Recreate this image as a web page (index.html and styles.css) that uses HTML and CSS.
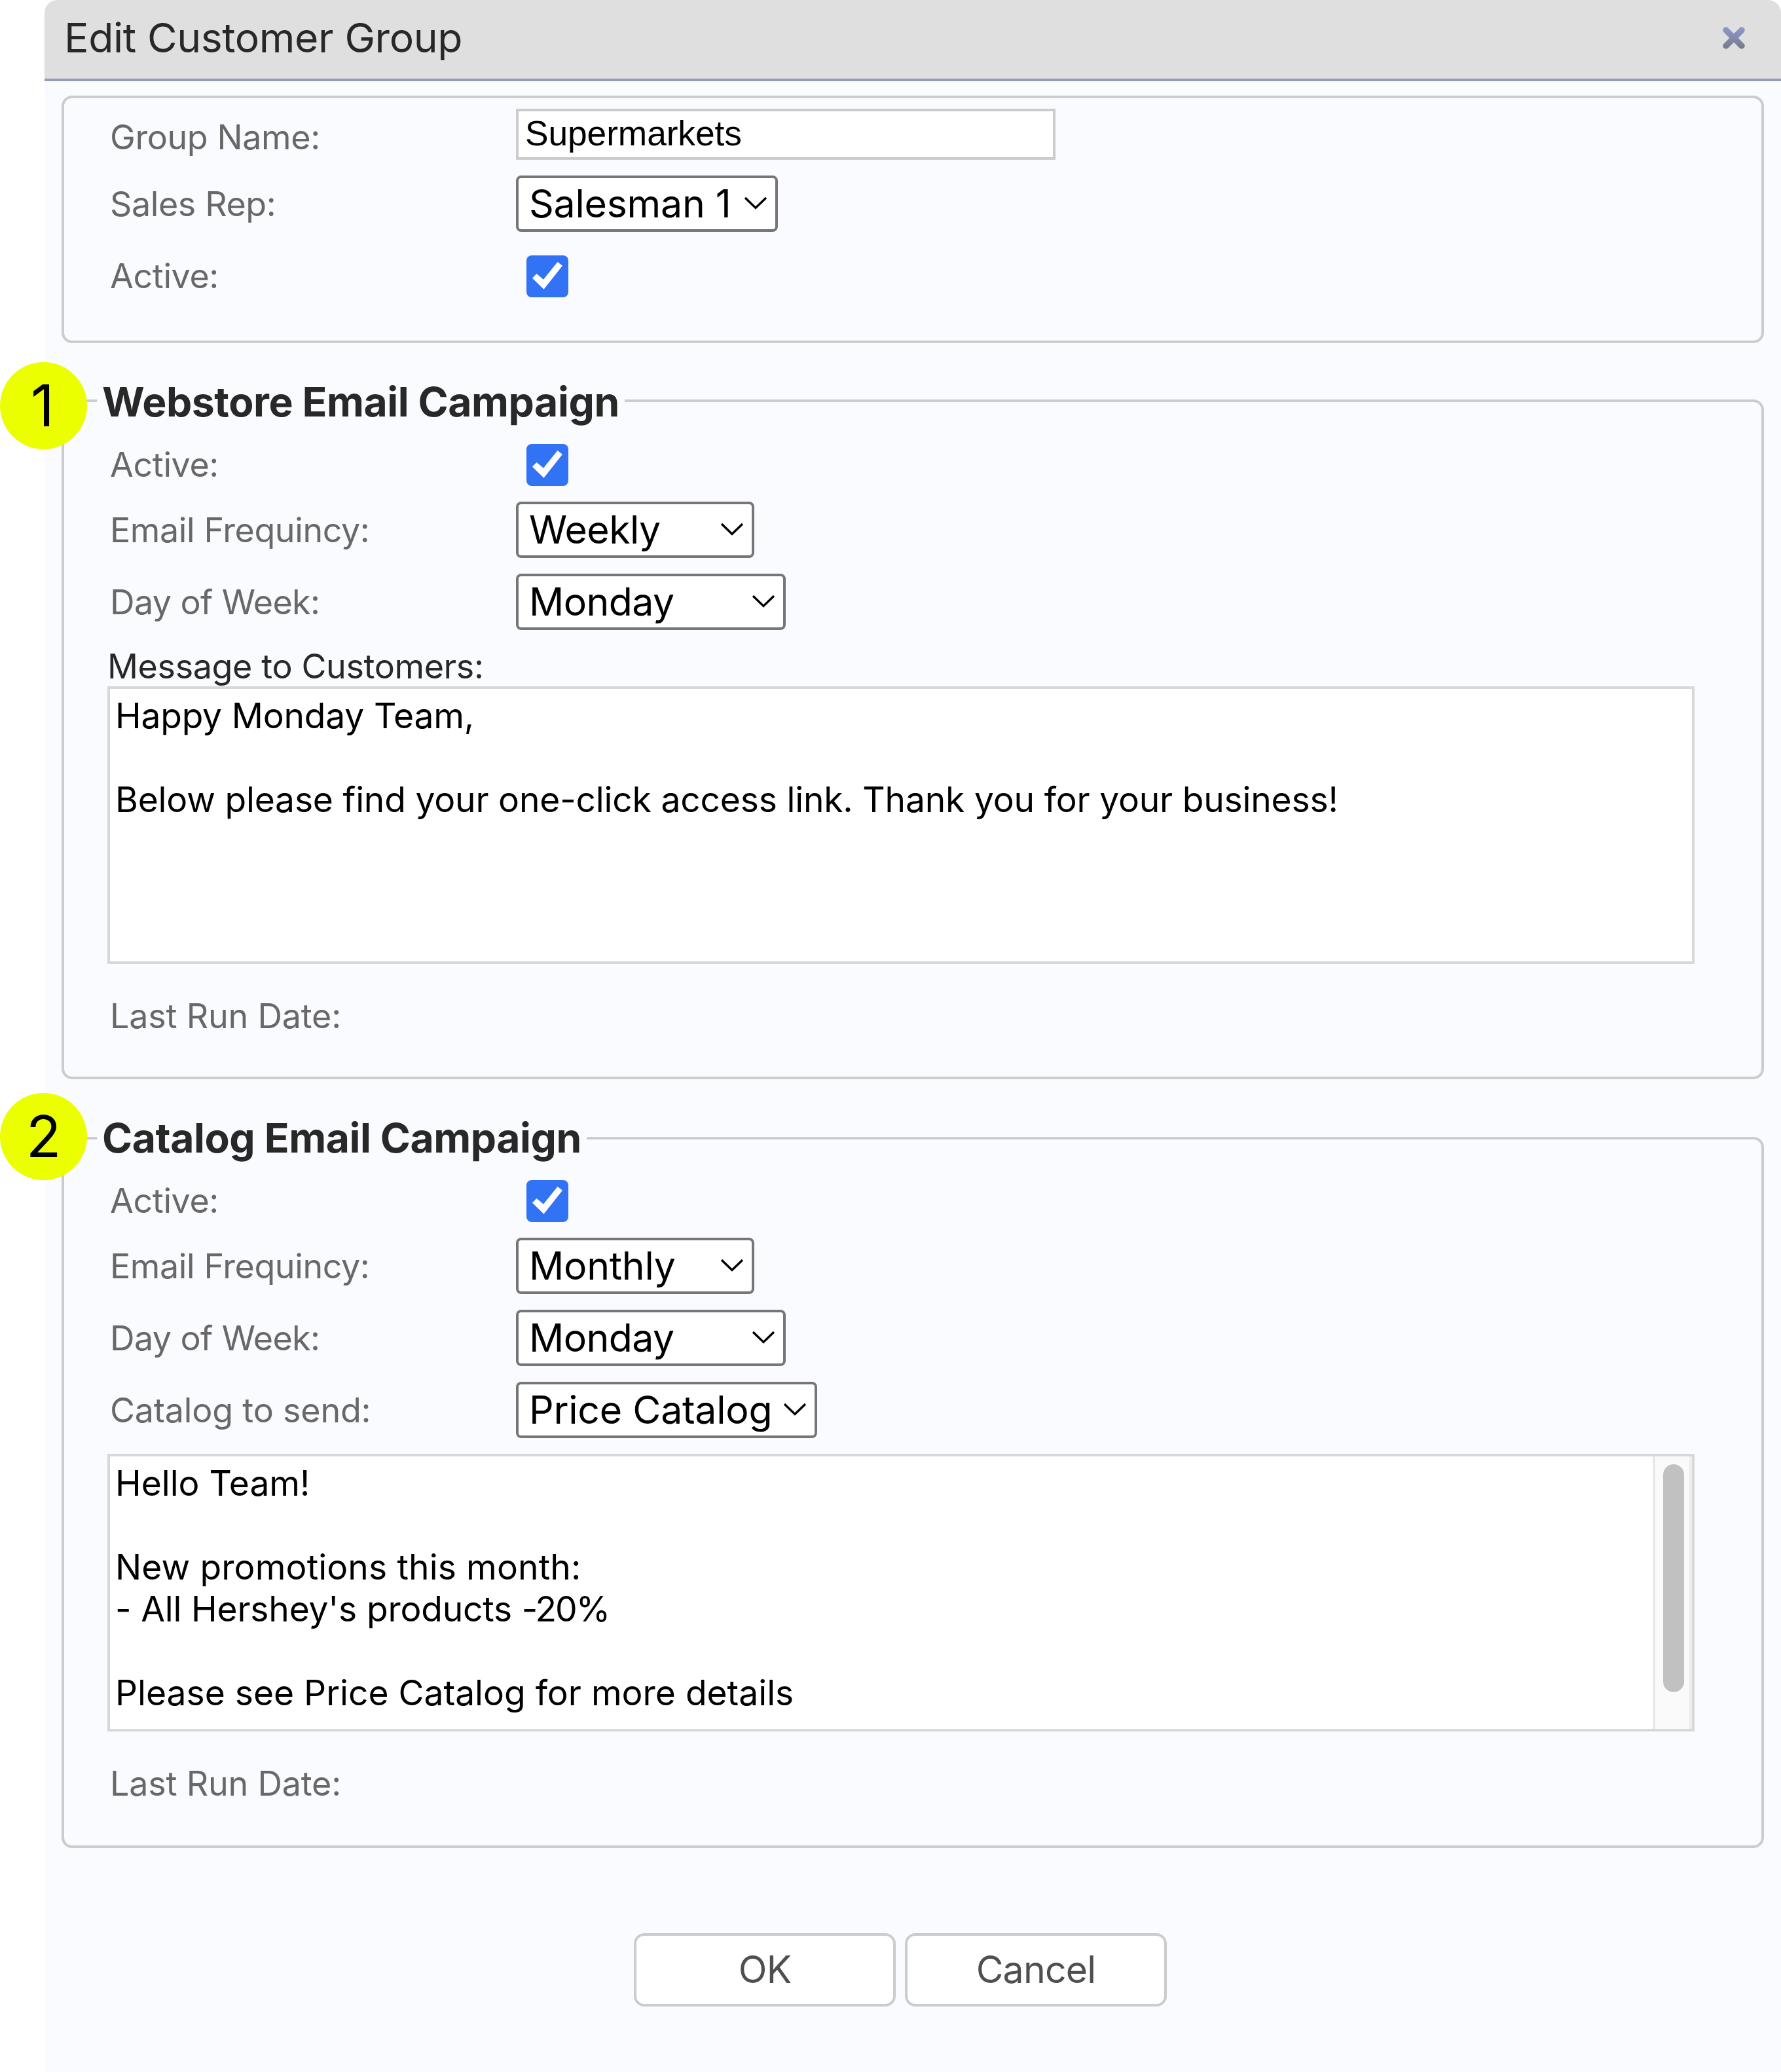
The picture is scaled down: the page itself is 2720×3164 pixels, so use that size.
FILE: index.html
```html
<!DOCTYPE html>
<html lang="en">
<head>
<meta charset="utf-8">
<title>Edit Customer Group</title>
<link rel="stylesheet" href="styles.css">
</head>
<body>
<svg class="defs" aria-hidden="true">
  <symbol id="check" viewBox="0 0 64 64"><path d="M9 34.7 15.5 28 26 36.7 47.5 10 55 15.7 26.5 51.7Z" fill="#fff"/></symbol>
  <symbol id="chevron" viewBox="0 0 36 22"><path d="M2 3 18 18.5 34 3" fill="none" stroke="#000" stroke-width="3.4"/></symbol>
</svg>
<main class="dialog">
  <header class="titlebar">
    <h1 class="title">Edit Customer Group</h1>
    <svg class="close" viewBox="0 0 36 36">
      <defs><linearGradient id="g" gradientUnits="userSpaceOnUse" x1="0" y1="2" x2="0" y2="34"><stop offset="0" stop-color="#8e97cc"/><stop offset="1" stop-color="#777a8b"/></linearGradient></defs>
      <path d="M6 6 30 30M30 6 6 30" stroke="url(#g)" stroke-width="9.5" stroke-linecap="round"/>
    </svg>
  </header>

  <fieldset class="group general">
    <div class="row"><label class="label">Group Name:</label><div class="input">Supermarkets</div></div>
    <div class="row gap-m"><label class="label">Sales Rep:</label><div class="select w-rep"><span>Salesman 1</span><svg class="chevron"><use href="#chevron"/></svg></div></div>
    <div class="row gap-l"><label class="label">Active:</label><svg class="checkbox"><use href="#check"/></svg></div>
  </fieldset>

  <fieldset class="group webstore">
    <legend class="legend">Webstore Email Campaign</legend>
    <div class="row"><label class="label">Active:</label><svg class="checkbox"><use href="#check"/></svg></div>
    <div class="row gap-s"><label class="label">Email Frequincy:</label><div class="select w-freq"><span class="tight">Weekly</span><svg class="chevron"><use href="#chevron"/></svg></div></div>
    <div class="row gap-l"><label class="label tight">Day of Week:</label><div class="select w-day"><span class="tight">Monday</span><svg class="chevron"><use href="#chevron"/></svg></div></div>
    <div class="caption">Message to Customers:</div>
    <div class="textarea"><div class="text snug">Happy Monday Team,

Below please find your one-click access link. Thank you for your business!</div></div>
    <div class="row last-run"><label class="label">Last Run Date:</label></div>
    <div class="badge one">1</div>
  </fieldset>

  <fieldset class="group catalog">
    <legend class="legend">Catalog Email Campaign</legend>
    <div class="row"><label class="label">Active:</label><svg class="checkbox"><use href="#check"/></svg></div>
    <div class="row gap-s"><label class="label">Email Frequincy:</label><div class="select w-freq"><span>Monthly</span><svg class="chevron"><use href="#chevron"/></svg></div></div>
    <div class="row gap-l"><label class="label tight">Day of Week:</label><div class="select w-day"><span class="tight">Monday</span><svg class="chevron"><use href="#chevron"/></svg></div></div>
    <div class="row gap-l"><label class="label loose">Catalog to send:</label><div class="select w-cat"><span>Price Catalog</span><svg class="chevron"><use href="#chevron"/></svg></div></div>
    <div class="textarea gap-top"><div class="text">Hello Team!

<span class="wide">New promotions this month:</span>
<span class="snug">- All Hershey's products </span><span class="percent">-20%</span>

Please see Price Catalog for more details</div><div class="track"><div class="thumb"></div></div></div>
    <div class="row last-run"><label class="label">Last Run Date:</label></div>
    <div class="badge two">2</div>
  </fieldset>

  <footer class="actions">
    <button class="button">OK</button>
    <button class="button">Cancel</button>
  </footer>
</main>
</body>
</html>
```
FILE: styles.css
```css
* { box-sizing: border-box; }
body {
  margin: 0;
  background: #fff;
  font-family: Inter, "Liberation Sans", sans-serif;
  color: #282828;
}
.defs { position: absolute; width: 0; height: 0; }
.dialog {
  margin-left: 68px;
  min-height: 3164px;
  background: #fafbfe;
  border-radius: 20px 20px 0 0;
}
.titlebar {
  display: flex;
  justify-content: space-between;
  height: 124px;
  padding: 0 54px 0 30px;
  background: #dfdfdf;
  border-bottom: 4px solid #8f9dba;
  border-radius: 20px 20px 0 0;
}
.title {
  margin: 0;
  font-size: 62.4px;
  font-weight: 400;
  line-height: 115px;
  letter-spacing: -0.36px;
}
.close { width: 36px; height: 36px; margin-top: 40px; }

.group {
  position: relative;
  min-width: 0;
  margin: 0 26px;
  padding: 0 0 0 50px;
  border: 4px solid #ccc;
  border-radius: 16px;
}
.general { height: 378px; margin-top: 22px; padding-top: 16px; }
.webstore { height: 1074px; margin-top: 50px; padding-top: 16px; }
.catalog { height: 1122px; margin-top: 52px; padding-top: 14px; }
.legend {
  padding: 0 8px;
  font-size: 62.4px;
  font-weight: 700;
  line-height: 76px;
  letter-spacing: -0.43px;
}
.webstore .legend { padding-top: 3px; line-height: 73px; }

.row { display: flex; height: 86px; margin-left: 20px; }
.gap-s { margin-top: 14px; }
.gap-m { margin-top: 16px; }
.gap-l { margin-top: 24px; }
.label {
  width: 620px;
  font-size: 52px;
  line-height: 88px;
  letter-spacing: -0.4px;
  color: #686868;
}
.input {
  width: 824px;
  height: 78px;
  padding-left: 10px;
  border: 4px solid #ccc;
  background: #fff;
  font: 53.33px/67px "Liberation Sans", Arial, sans-serif;
  letter-spacing: -0.1px;
  color: #000;
}
.select {
  display: flex;
  justify-content: space-between;
  height: 86px;
  padding: 0 12px 0 16px;
  border: 4px solid #767676;
  border-radius: 8px;
  background: #fff;
  font-size: 59px;
  line-height: 78px;
  letter-spacing: -0.25px;
  white-space: nowrap;
  color: #000;
}
.tight { letter-spacing: -0.6px; }
.loose { letter-spacing: -0.2px; }
.w-rep { width: 400px; }
.w-freq { width: 364px; }
.w-day { width: 412px; }
.w-cat { width: 460px; }
.chevron { flex: none; width: 36px; height: 22px; margin-top: 27px; }
.checkbox {
  width: 64px;
  height: 64px;
  margin: 12px 0 0 16px;
  border-radius: 8px;
  background: #3273f6;
}
.caption {
  height: 62px;
  margin: 24px 0 0 16px;
  padding-top: 1px;
  font-size: 52px;
  line-height: 62px;
  letter-spacing: -0.37px;
}
.textarea {
  display: flex;
  width: 2424px;
  height: 424px;
  margin-left: 16px;
  border: 4px solid #d8d8d8;
  background: #fff;
  color: #000;
}
.gap-top { margin-top: 24px; }
.text {
  flex: 1;
  padding: 9px 8px 0;
  font-size: 53.33px;
  line-height: 64px;
  white-space: pre-wrap;
}
.snug { letter-spacing: -0.18px; }
.wide { letter-spacing: 0.13px; }
.percent { letter-spacing: -2px; }
.track {
  width: 60px;
  padding: 12px;
  border: solid #e8e8e8;
  border-width: 0 4px;
  border-right-color: #ededed;
  background: #fafafa;
}
.thumb { width: 32px; height: 348px; border-radius: 16px; background: #c1c1c1; }
.last-run { margin-top: 36px; }
.last-run .label { letter-spacing: -0.2px; }

.badge {
  position: absolute;
  left: -98px;
  width: 133px;
  height: 133px;
  border-radius: 50%;
  background: #ebff00;
  font-size: 88px;
  line-height: 133px;
  text-align: center;
  color: #000;
}
.one { top: -97px; padding-right: 3px; }
.two { top: -107px; }

.actions { display: flex; gap: 14px; margin: 130px 0 0 900px; }
.button {
  width: 400px;
  height: 112px;
  padding: 0 0 1px;
  border: 4px solid #ccc;
  border-radius: 16px;
  background: #fff;
  font: 57.2px Inter, sans-serif;
  letter-spacing: -0.8px;
  color: #4f4f4f;
}
```
